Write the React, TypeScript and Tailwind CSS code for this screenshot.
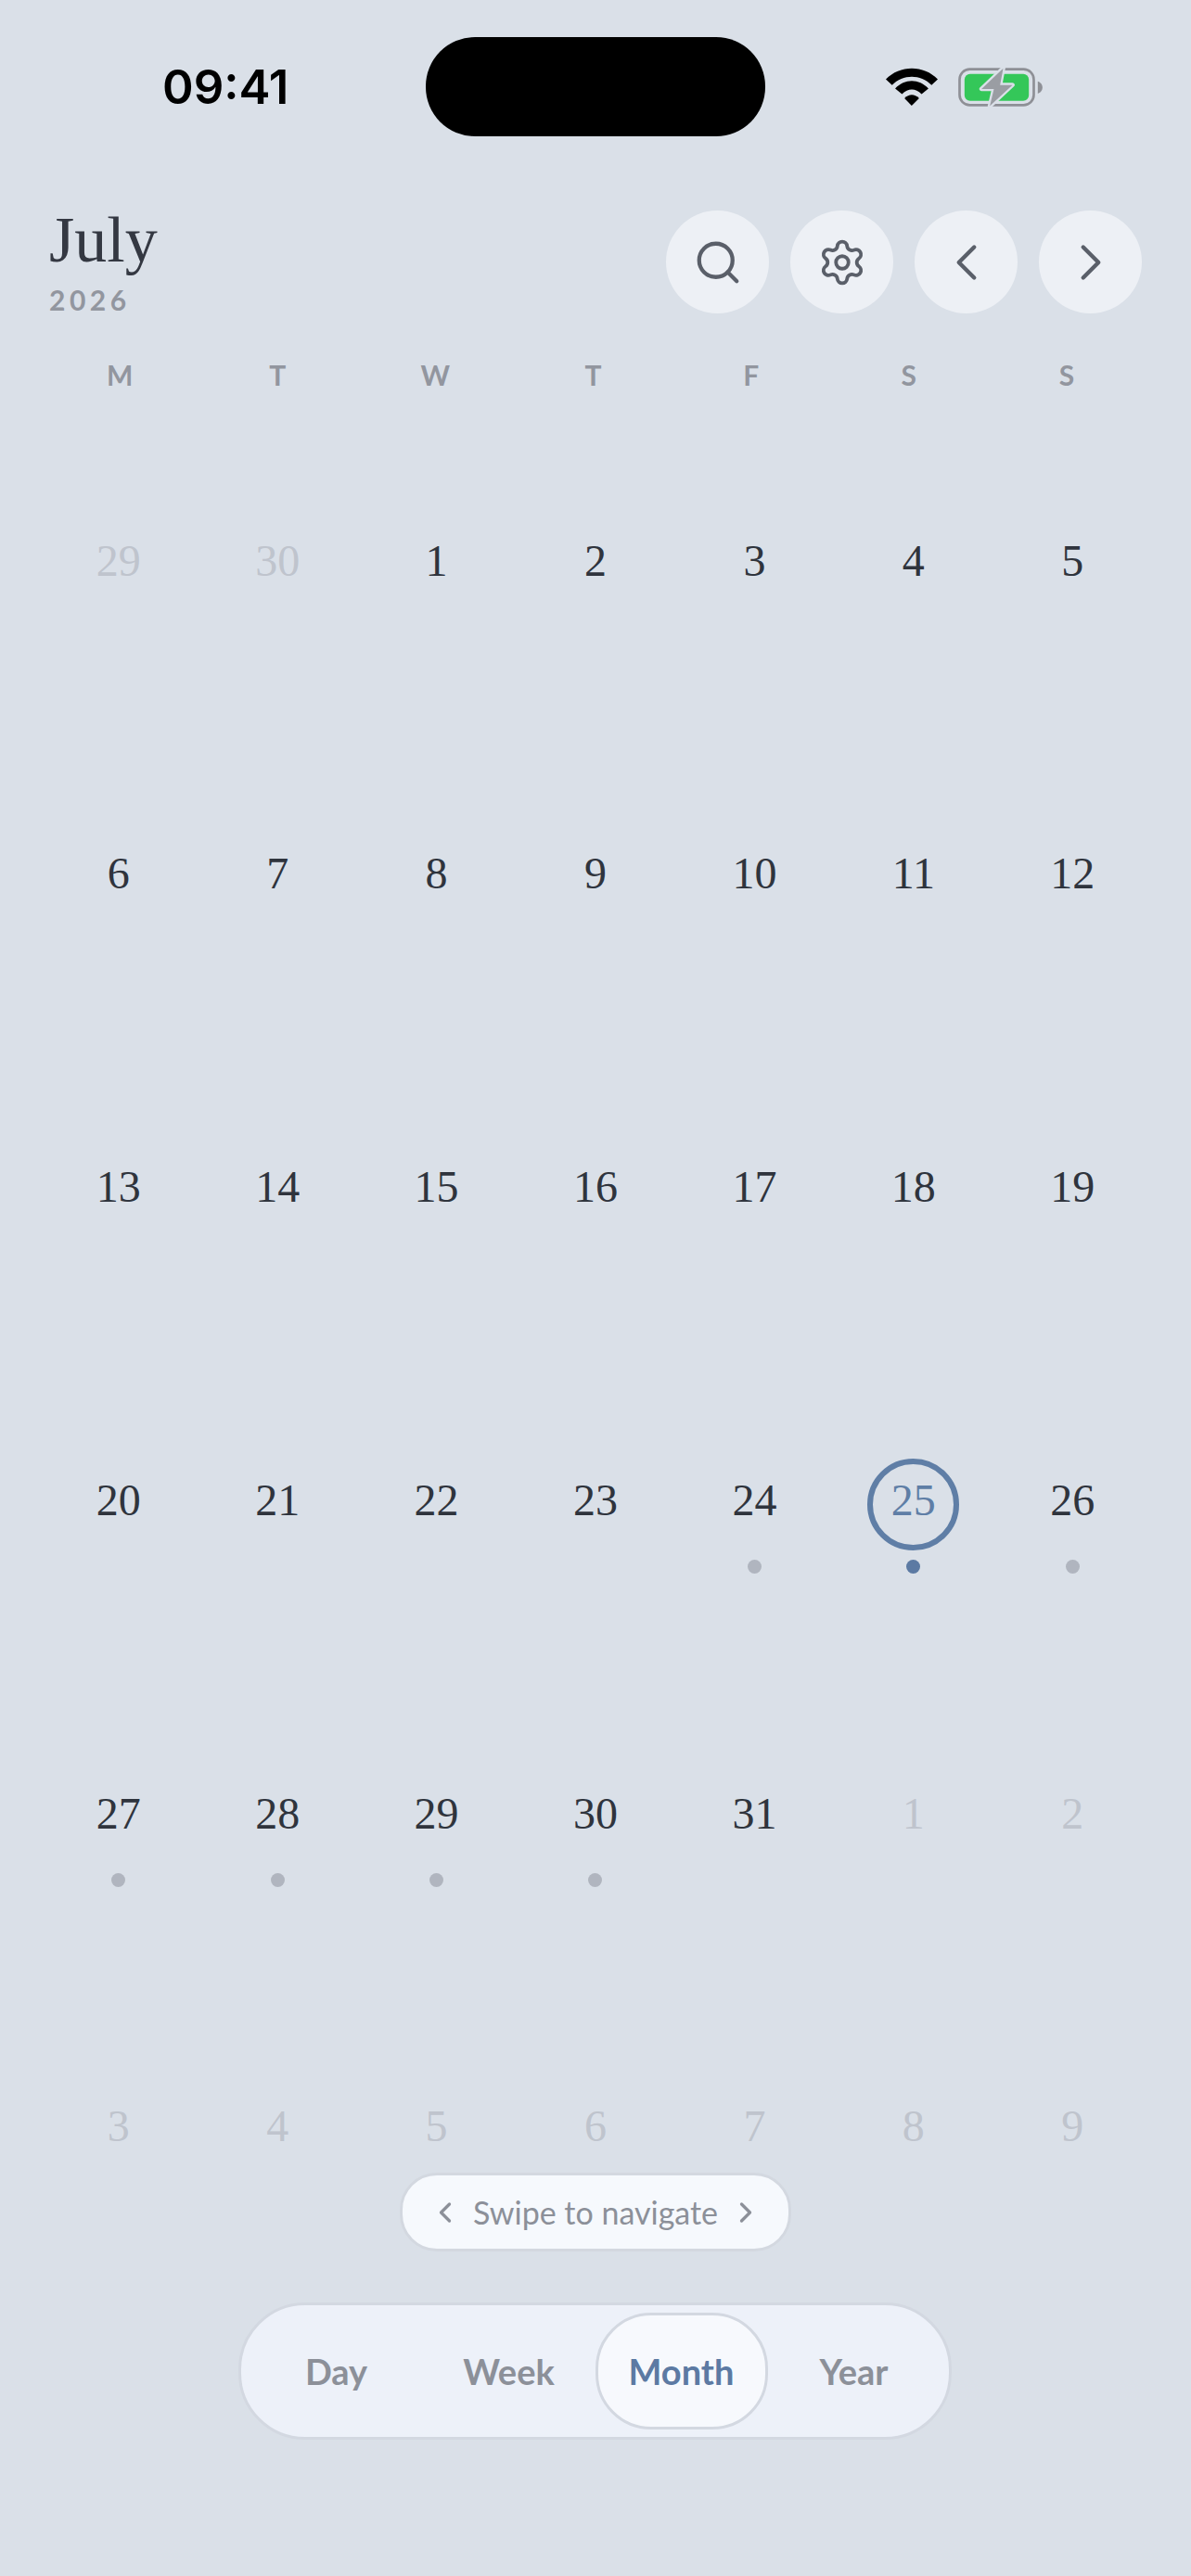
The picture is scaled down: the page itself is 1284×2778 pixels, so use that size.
import React from "react";
import { Search, Settings, ChevronLeft, ChevronRight } from "lucide-react";

type Day = { n: number; muted?: boolean; dot?: boolean; today?: boolean };

const rows: Day[][] = [
  [{ n: 29, muted: true }, { n: 30, muted: true }, { n: 1 }, { n: 2 }, { n: 3 }, { n: 4 }, { n: 5 }],
  [{ n: 6 }, { n: 7 }, { n: 8 }, { n: 9 }, { n: 10 }, { n: 11 }, { n: 12 }],
  [{ n: 13 }, { n: 14 }, { n: 15 }, { n: 16 }, { n: 17 }, { n: 18 }, { n: 19 }],
  [{ n: 20 }, { n: 21 }, { n: 22 }, { n: 23 }, { n: 24, dot: true }, { n: 25, dot: true, today: true }, { n: 26, dot: true }],
  [{ n: 27, dot: true }, { n: 28, dot: true }, { n: 29, dot: true }, { n: 30, dot: true }, { n: 31 }, { n: 1, muted: true }, { n: 2, muted: true }],
  [{ n: 3, muted: true }, { n: 4, muted: true }, { n: 5, muted: true }, { n: 6, muted: true }, { n: 7, muted: true }, { n: 8, muted: true }, { n: 9, muted: true }],
];

const weekdays = ["M", "T", "W", "T", "F", "S", "S"];

function Wifi() {
  return (
    <svg width="56" height="41" viewBox="75 68 167 122" fill="#000">
      <path d="M75 105 C120 58 197 58 242 105 L222 124 C187 88 130 88 95 124 Z" />
      <path d="M105 135 C135 102 182 102 212 135 L190 153 C170 133 147 133 127 153 Z" />
      <path d="M135 166 C150 151 167 151 182 166 L158 190 Z" />
    </svg>
  );
}

function Battery() {
  return (
    <svg width="91" height="42" viewBox="310 66 272 126">
      <rect x="314" y="71" width="240" height="116" rx="33" fill="none" stroke="#8e9096" strokeWidth="8" />
      <rect x="330" y="86" width="208" height="87" rx="18" fill="#34c759" />
      <path d="M567 110 C578 114 582 122 582 130 C582 138 578 146 567 150 Z" fill="#8e9096" />
      <polygon points="455,68 385,135 425,135 412,190 485,122 445,122" fill="#9a9da3" stroke="#dae0e8" strokeWidth="14" strokeLinejoin="round" />
      <polygon points="455,68 385,135 425,135 412,190 485,122 445,122" fill="#9a9da3" />
    </svg>
  );
}

function IconButton({ children }: { children: React.ReactNode }) {
  return (
    <button className="w-[111px] h-[111px] rounded-full bg-[#edf0f5] flex items-center justify-center text-[#5a5f69]">
      {children}
    </button>
  );
}

function DayCell({ day }: { day: Day }) {
  return (
    <div className="flex flex-col items-center">
      <div
        className={`w-[99px] h-[99px] rounded-full flex items-center justify-center pb-[10px] text-[48px] leading-none ${
          day.today
            ? "border-[6px] border-[#5f7ea6] text-[#5f7ea6]"
            : day.muted
            ? "text-[#bfc4cd]"
            : "text-[#2f343d]"
        }`}
      >
        {day.n}
      </div>
      {day.dot && (
        <div className={`mt-[10px] w-[15px] h-[15px] rounded-full ${day.today ? "bg-[#5c7aa3]" : "bg-[#b0b5bf]"}`} />
      )}
    </div>
  );
}

export default function App() {
  return (
    <div className="relative w-[1284px] h-[2778px] overflow-hidden bg-[#dae0e8] font-['Liberation_Serif',serif]">
      {/* Status bar */}
      <div className="flex items-center pt-[40px] h-[147px]">
        <div className="w-[459px] pl-[175px] font-['Inter',sans-serif] font-semibold text-[51px] leading-none text-black">
          09:41
        </div>
        <div className="w-[366px] h-[107px] rounded-[53px] bg-black" />
        <div className="flex items-center gap-[22px] pl-[130px]">
          <Wifi />
          <Battery />
        </div>
      </div>

      {/* Header */}
      <div className="flex justify-between pl-[53px] pr-[53px] mt-[80px] h-[111px]">
        <div className="flex flex-col">
          <div className="text-[70px] leading-[70px] text-[#343842] -mt-[3px] h-[85px]">July</div>
          <div className="font-['Lato',sans-serif] font-bold text-[30px] leading-none tracking-[0.15em] text-[#92969f]">2026</div>
        </div>
        <div className="flex gap-[23px]">
          <IconButton><Search size={54} strokeWidth={1.9} /></IconButton>
          <IconButton><Settings size={54} strokeWidth={1.7} /></IconButton>
          <IconButton><ChevronLeft size={66} strokeWidth={1.6} /></IconButton>
          <IconButton><ChevronRight size={66} strokeWidth={1.6} /></IconButton>
        </div>
      </div>

      {/* Weekdays */}
      <div className="grid grid-cols-7 ml-[44px] w-[1191px] mt-[48px] font-['Lato',sans-serif] font-bold text-[30px] leading-[36px] text-[#92969f] text-center">
        {weekdays.map((d, i) => (
          <div key={i}>{d}</div>
        ))}
      </div>

      {/* Days */}
      <div className="mt-[138px] ml-[42px] w-[1200px]">
        {rows.map((row, r) => (
          <div key={r} className="grid grid-cols-7 h-[337.8px]">
            {row.map((d, i) => (
              <DayCell key={i} day={d} />
            ))}
          </div>
        ))}
      </div>

      {/* Swipe hint */}
      <div className="absolute left-[431px] top-[2343px] w-[422px] h-[85px] rounded-[40px] border-[3px] border-[#d3d8e0] bg-[#f6f9fd] flex items-center justify-center gap-[12px] text-[#8c9099] font-['Lato',sans-serif] text-[34px]">
        <ChevronLeft size={36} strokeWidth={2.2} />
        <span>Swipe to navigate</span>
        <ChevronRight size={36} strokeWidth={2.2} />
      </div>

      {/* Segmented */}
      <div className="absolute left-[257px] top-[2483px] w-[769px] h-[148px] rounded-[72px] border-[3px] border-[#d3d8e1] bg-[#edf1f9] flex items-center justify-center font-['Lato',sans-serif] font-bold text-[38px] text-[#8c9099]">
        <div className="w-[186px] text-center">Day</div>
        <div className="w-[186px] text-center">Week</div>
        <div className="w-[186px] h-[126px] rounded-[60px] border-[3px] border-[#d3d8e1] bg-[#f7f9fd] flex items-center justify-center text-[#5c7aa3]">Month</div>
        <div className="w-[186px] text-center">Year</div>
      </div>
    </div>
  );
}
